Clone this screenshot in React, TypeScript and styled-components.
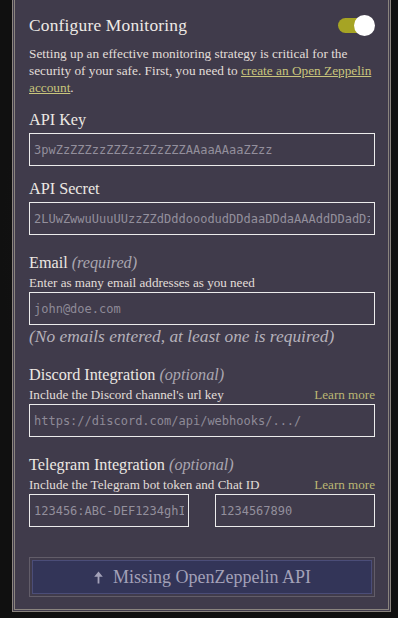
import * as React from 'react'
import styled, {createGlobalStyle} from 'styled-components'

const GlobalStyle = createGlobalStyle`
  html, body {
    margin: 0;
    padding: 0;
    background: #131313;
  }
  body {
    font-family: 'Liberation Serif', 'Times New Roman', serif;
  }
  * { box-sizing: border-box; }
`

const Page = styled.div`
  width: 398px;
  height: 618px;
  padding: 0 7px 7px 12px;
  background: radial-gradient(ellipse at 50% 40%, #1d1a1d 0%, #101010 70%);
  overflow: hidden;
`

const Card = styled.section`
  background: #403b4b;
  border: 3px double #8a847e;
  border-top: none;
  padding: 10px 13px 12px 14px;
  display: flex;
  flex-direction: column;
`

const HeaderRow = styled.div`
  display: flex;
  align-items: center;
  justify-content: space-between;
  height: 30px;
  padding-right: 1px;
`

const Title = styled.h1`
  margin: 0;
  font-size: 17.4px;
  font-weight: 400;
  color: #eeeae6;
  letter-spacing: 0.2px;
`

const Toggle = styled.div<{on?: boolean}>`
  position: relative;
  width: 36px;
  height: 15px;
  border-radius: 8px;
  background: ${p => (p.on ? '#a6a424' : '#6a6672')};
  &::after {
    content: '';
    position: absolute;
    top: -3px;
    ${p => (p.on ? 'right: -1px;' : 'left: -1px;')}
    width: 21px;
    height: 21px;
    border-radius: 50%;
    background: #ffffff;
  }
`

const Intro = styled.p`
  margin: 5px 0 0;
  font-size: 13.3px;
  line-height: 17px;
  color: #e2ded9;
`

const Link = styled.a`
  color: #c9c57c;
  text-decoration: underline;
  text-underline-offset: 1px;
`

const Field = styled.div<{gap: number}>`
  display: flex;
  flex-direction: column;
  margin-top: ${p => p.gap}px;
`

const Label = styled.label`
  font-size: 16.2px;
  line-height: 22px;
  color: #ece8e3;
  margin-bottom: 2px;
`

const Hint = styled.em`
  color: #aaa6b0;
`

const HelperRow = styled.div`
  display: flex;
  justify-content: space-between;
  align-items: baseline;
  font-size: 13.1px;
  line-height: 18px;
  color: #e2ded9;
  margin-top: -2px;
`

const LearnMore = styled.span`
  color: #bbb774;
`

const Input = styled.input`
  width: 100%;
  height: 33px;
  padding: 0 4px;
  background: transparent;
  border: 1px solid #ececec;
  border-radius: 0;
  outline: none;
  font-family: 'DejaVu Sans Mono', 'Liberation Mono', monospace;
  font-size: 12px;
  color: #938f9c;
  &::placeholder {
    color: #8e8a97;
  }
`

const Pair = styled.div`
  display: grid;
  grid-template-columns: 1fr 1fr;
  column-gap: 26px;
`

const Note = styled.em`
  font-size: 17.4px;
  line-height: 22px;
  color: #b5b1ba;
`

const ButtonFrame = styled.div`
  margin-top: 30px;
  border: 1px solid #625d69;
  padding: 2px;
`

const Button = styled.button`
  width: 100%;
  height: 34px;
  border: 1px solid #4b4d78;
  background: #333558;
  color: #a3a1b8;
  font-family: 'Liberation Serif', 'Times New Roman', serif;
  font-size: 18px;
  display: flex;
  align-items: center;
  justify-content: center;
  gap: 9px;
`

const ArrowUp = () => (
  <svg width="11" height="13" viewBox="0 0 11 13" fill="#a3a1b8">
    <path d="M5.5 0.5 L9.8 5.8 L6.4 5.8 L6.4 12.5 L4.6 12.5 L4.6 5.8 L1.2 5.8 Z" />
  </svg>
)

export default function App() {
  return (
    <Page>
      <GlobalStyle />
      <Card>
        <HeaderRow>
          <Title>Configure Monitoring</Title>
          <Toggle on />
        </HeaderRow>
        <Intro>
          Setting up an effective monitoring strategy is critical for the security of your safe.
          First, you need to <Link href="#">create an Open Zeppelin account</Link>.
        </Intro>

        <Field gap={13}>
          <Label>API Key</Label>
          <Input defaultValue="3pwZzZZZzzZZZzzZZzZZZAAaaAAaaZZzz" />
        </Field>

        <Field gap={12}>
          <Label>API Secret</Label>
          <Input defaultValue="2LUwZwwuUuuUUzzZZdDddooodudDDdaaDDdaAAAddDDadDz" />
        </Field>

        <Field gap={17}>
          <Label>
            Email <Hint>(required)</Hint>
          </Label>
          <HelperRow>Enter as many email addresses as you need</HelperRow>
          <Input placeholder="john@doe.com" />
          <Note>(No emails entered, at least one is required)</Note>
        </Field>

        <Field gap={17}>
          <Label>
            Discord Integration <Hint>(optional)</Hint>
          </Label>
          <HelperRow>
            <span>Include the Discord channel's url key</span>
            <LearnMore>Learn more</LearnMore>
          </HelperRow>
          <Input placeholder="https://discord.com/api/webhooks/.../" />
        </Field>

        <Field gap={17}>
          <Label>
            Telegram Integration <Hint>(optional)</Hint>
          </Label>
          <HelperRow>
            <span>Include the Telegram bot token and Chat ID</span>
            <LearnMore>Learn more</LearnMore>
          </HelperRow>
          <Pair>
            <Input defaultValue="123456:ABC-DEF1234ghIkl-zyx57W2v1u123ew11" />
            <Input defaultValue="1234567890" />
          </Pair>
        </Field>

        <ButtonFrame>
          <Button>
            <ArrowUp />
            Missing OpenZeppelin API
          </Button>
        </ButtonFrame>
      </Card>
    </Page>
  )
}
